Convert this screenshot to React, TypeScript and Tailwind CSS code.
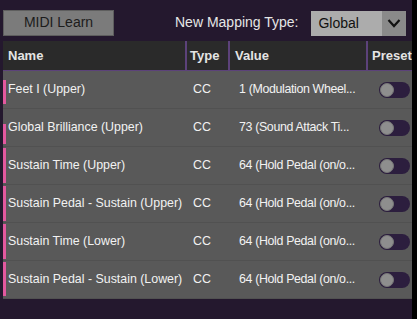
import React from "react";

type Row = { name: string; value: string; stripe: string };

const rows: Row[] = [
  { name: "Feet I (Upper)", value: "1 (Modulation Wheel...", stripe: "mt-[9px] mb-[4px]" },
  { name: "Global Brilliance (Upper)", value: "73 (Sound Attack Ti...", stripe: "mt-[15px] mb-[2px]" },
  { name: "Sustain Time (Upper)", value: "64 (Hold Pedal (on/o...", stripe: "mt-[1px] mb-[1px]" },
  { name: "Sustain Pedal - Sustain (Upper)", value: "64 (Hold Pedal (on/o...", stripe: "mt-[1px] mb-[1px]" },
  { name: "Sustain Time (Lower)", value: "64 (Hold Pedal (on/o...", stripe: "mt-[1px] mb-[1px]" },
  { name: "Sustain Pedal - Sustain (Lower)", value: "64 (Hold Pedal (on/o...", stripe: "mt-[1px] mb-[2px]" },
];

const Toggle: React.FC = () => (
  <div className="w-[31px] h-[16px] rounded-full bg-[#2c1e3e] flex items-center px-[1px]">
    <div className="w-[14px] h-[14px] rounded-full bg-[#8e8e8e] border border-[#777]" />
  </div>
);

const App: React.FC = () => {
  return (
    <div
      className="w-[417px] h-[319px] bg-black flex overflow-hidden"
      style={{ fontFamily: '"Liberation Sans", Arial, sans-serif' }}
    >
      <div className="w-[412px] h-full bg-[#24182e] overflow-hidden">
        {/* Top bar */}
        <div className="flex items-center h-[41px] pl-[3px] pt-[4px]">
          <button className="w-[111px] h-[26px] bg-[#7b7b7b] border border-[#5e5e5e] text-[#1c1c1c] text-[14px]">
            MIDI Learn
          </button>
          <span className="ml-[61px] text-[14px] text-[#e6e6e6]">New Mapping Type:</span>
          <div className="ml-[13px] mt-[1px] w-[95px] h-[25px] bg-[#acacac] flex">
            <span className="flex-1 pl-[7px] text-[14px] text-[#111] leading-[25px]">Global</span>
            <div className="w-[24px] h-full bg-[#8a8a8a] flex items-center justify-center">
              <svg width="14" height="10" viewBox="0 0 14 10">
                <path d="M1.5 2 L7 8 L12.5 2" fill="none" stroke="#111" strokeWidth="2.2" />
              </svg>
            </div>
          </div>
        </div>

        {/* Table */}
        <div className="ml-[3px] w-[420px]">
          {/* Header */}
          <div className="flex h-[30px] bg-[#2a2a2a] border-b border-[#5c427a] text-[13px] font-bold text-[#e4e4e4]">
            <div className="w-[182px] pl-[5px] flex items-center">Name</div>
            <div className="w-[2px] bg-[#5c427a]" />
            <div className="w-[41px] pl-[3px] flex items-center">Type</div>
            <div className="w-[2px] bg-[#5c427a]" />
            <div className="w-[136px] pl-[5px] flex items-center">Value</div>
            <div className="w-[2px] bg-[#5c427a]" />
            <div className="flex-1 pl-[4px] flex items-center">Preset</div>
          </div>

          {/* Rows */}
          <div className="w-[409px] bg-[#595959]">
            {rows.map((r, i) => (
              <div
                key={i}
                className="flex h-[38px] border-b border-[#515151] text-[12.4px] text-[#f2f2f2]"
              >
                <div className={`w-[3px] bg-[#e3589f] ${r.stripe}`} />
                <div className="w-[181px] pl-[2px] flex items-center whitespace-nowrap">{r.name}</div>
                <div className="w-[45px] pl-[6px] flex items-center">CC</div>
                <div className="w-[139px] pl-[7px] flex items-center whitespace-nowrap tracking-[-0.35px]">
                  {r.value}
                </div>
                <div className="flex-1 pl-[8px] flex items-center">
                  <Toggle />
                </div>
              </div>
            ))}
          </div>
        </div>
      </div>
    </div>
  );
};

export default App;
